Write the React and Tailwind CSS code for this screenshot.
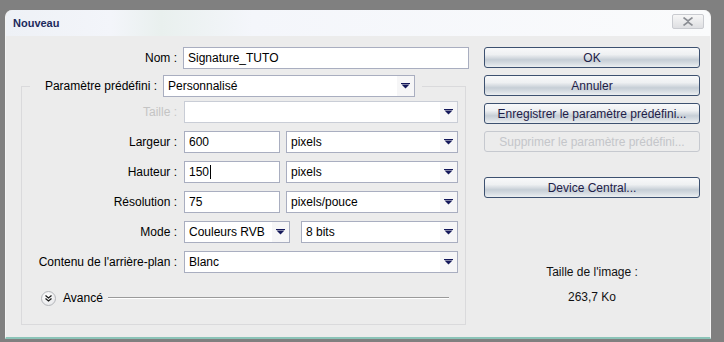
import React from "react";

const font = { fontFamily: '"Liberation Sans", Arial, sans-serif' };

// small navy drop arrow used by the selects
const Arrow = () => (
  <svg width="9" height="6" viewBox="0 0 9 6">
    <rect x="0" y="0" width="9" height="1" fill="#14185a" />
    <path d="M0.5 1.5 H8.5 L4.5 5.5 Z" fill="#14185a" />
  </svg>
);

const Select = ({ value, w, disabled }) => (
  <div
    className={`h-[22px] flex items-center border bg-white ${
      disabled ? "border-[#c9cdd6]" : "border-[#a9aec0]"
    } ${w}`}
  >
    <span className="flex-1 pl-[4px] truncate">{value}</span>
    <span className="w-[17px] h-full flex items-center justify-center bg-[#f6f6f7]">
      <Arrow />
    </span>
  </div>
);

const Input = ({ value, w, caret }) => (
  <div className={`h-[22px] flex items-center border border-[#a9aec0] bg-white pl-[4px] ${w}`}>
    {value}
    {caret && <span className="w-px h-[14px] bg-black ml-[1px]" />}
  </div>
);

const Btn = ({ label, disabled }) => (
  <div
    className={`h-[21px] w-[216px] rounded-[3px] border flex items-center justify-center whitespace-nowrap ${
      disabled
        ? "border-[#c6c9cf] text-[#c4c6ca] bg-[#ececec]"
        : "border-[#3d5170] text-[#1e2048] bg-[linear-gradient(to_bottom,#f8f9fa_0%,#eef0f2_35%,#c6ced6_62%,#d6dce2_80%,#eceff1_100%)]"
    }`}
  >
    {label}
  </div>
);

const Row = ({ label, disabled, children }) => (
  <div className="flex items-center h-[22px]">
    <span className={`w-[157px] text-right pr-[2px] ${disabled ? "text-[#c4c4c4]" : ""}`}>{label}</span>
    <div className="ml-[5px] flex gap-[6px]">{children}</div>
  </div>
);

export default function App() {
  return (
    <div className="w-[724px] h-[342px] bg-[#808080] pt-[10px] pl-[5px] text-[12px] text-black overflow-hidden" style={font}>
      <div className="w-[706px] h-[329px] rounded-t-[7px] bg-[#ececec] border-l border-[#f4f4f4] border-b-2 border-b-[#8cc4b8] border-r border-r-[#f6f6f6] flex flex-col">
        {/* title bar */}
        <div className="h-[26px] rounded-t-[7px] bg-[linear-gradient(to_right,#eef1f6_0%,#f3f5fa_15%,#e9f0ee_22%,#f4f6fb_35%,#fafbfc_100%)] flex items-center justify-between pl-[7px] pr-[6px]">
          <span className="font-bold text-[11px] text-[#1c2a5c]">Nouveau</span>
          <div className="w-[32px] h-[15px] mt-[-3px] rounded-[2px] border border-[#c9cbd0] bg-[linear-gradient(to_bottom,#f7f7f7,#dedfe2)] flex items-center justify-center">
            <svg width="12" height="9" viewBox="0 0 12 9">
              <path d="M1.5 0.5 L6 4 L10.5 0.5 M1.5 8.5 L6 5 L10.5 8.5" stroke="#8a8d93" strokeWidth="1.6" fill="none" />
            </svg>
          </div>
        </div>

        {/* body */}
        <div className="flex pt-[11px]">
          <div className="w-[463px]">
            <div className="flex items-center h-[22px]">
              <span className="w-[173px] text-right pr-[2px]">Nom :</span>
              <div className="ml-[4px]">
                <Input value="Signature_TUTO" w="w-[286px]" />
              </div>
            </div>

            <fieldset className="ml-[15px] mt-[6px] w-[445px] border border-[#dadadc] pb-[17px]">
              <legend className="ml-[8px] px-[4px] pr-[7px]">
                <div className="flex items-center">
                  <span className="w-[125px] text-right pr-[2px] whitespace-nowrap">Paramètre prédéfini :</span>
                  <div className="ml-[4px]">
                    <Select value="Personnalisé" w="w-[252px] h-[20px]" />
                  </div>
                </div>
              </legend>

              <div className="flex flex-col gap-[8px] mt-[4px]">
                <Row label="Taille :" disabled>
                  <Select value="" w="w-[274px]" disabled />
                </Row>
                <Row label="Largeur :">
                  <Input value="600" w="w-[96px]" />
                  <Select value="pixels" w="w-[172px]" />
                </Row>
                <Row label="Hauteur :">
                  <Input value="150" w="w-[96px]" caret />
                  <Select value="pixels" w="w-[172px]" />
                </Row>
                <Row label="Résolution :">
                  <Input value="75" w="w-[96px]" />
                  <Select value="pixels/pouce" w="w-[172px]" />
                </Row>
                <Row label="Mode :">
                  <Select value="Couleurs RVB" w="w-[106px]" />
                  <div className="ml-[5px]">
                    <Select value="8 bits" w="w-[157px]" />
                  </div>
                </Row>
                <Row label="Contenu de l'arrière-plan :">
                  <Select value="Blanc" w="w-[274px]" />
                </Row>
              </div>

              <div className="flex items-center mt-[16px] pl-[19px] pr-[16px] h-[18px]">
                <div className="w-[15px] h-[15px] rounded-full border border-[#b4b6ba] bg-[radial-gradient(circle_at_40%_35%,#ffffff,#e2e3e6)] flex items-center justify-center">
                  <svg width="7" height="7" viewBox="0 0 7 7">
                    <path d="M0.5 0.5 L3.5 3 L6.5 0.5 M0.5 3.5 L3.5 6 L6.5 3.5" stroke="#1a1a1a" strokeWidth="1.3" fill="none" />
                  </svg>
                </div>
                <span className="ml-[7px]">Avancé</span>
                <div className="flex-1 ml-[5px] h-[2px] bg-[#9a9a9a] border-b border-white" />
              </div>
            </fieldset>
          </div>

          {/* buttons */}
          <div className="ml-[15px] w-[216px] flex flex-col gap-[7px] items-center">
            <Btn label="OK" />
            <Btn label="Annuler" />
            <Btn label="Enregistrer le paramètre prédéfini..." />
            <Btn label="Supprimer le paramètre prédéfini..." disabled />
            <div className="mt-[18px]">
              <Btn label="Device Central..." />
            </div>
            <div className="mt-[58px] flex flex-col items-center gap-[7px] text-[#111]">
              <span>Taille de l'image :</span>
              <span>263,7 Ko</span>
            </div>
          </div>
        </div>
      </div>
    </div>
  );
}
